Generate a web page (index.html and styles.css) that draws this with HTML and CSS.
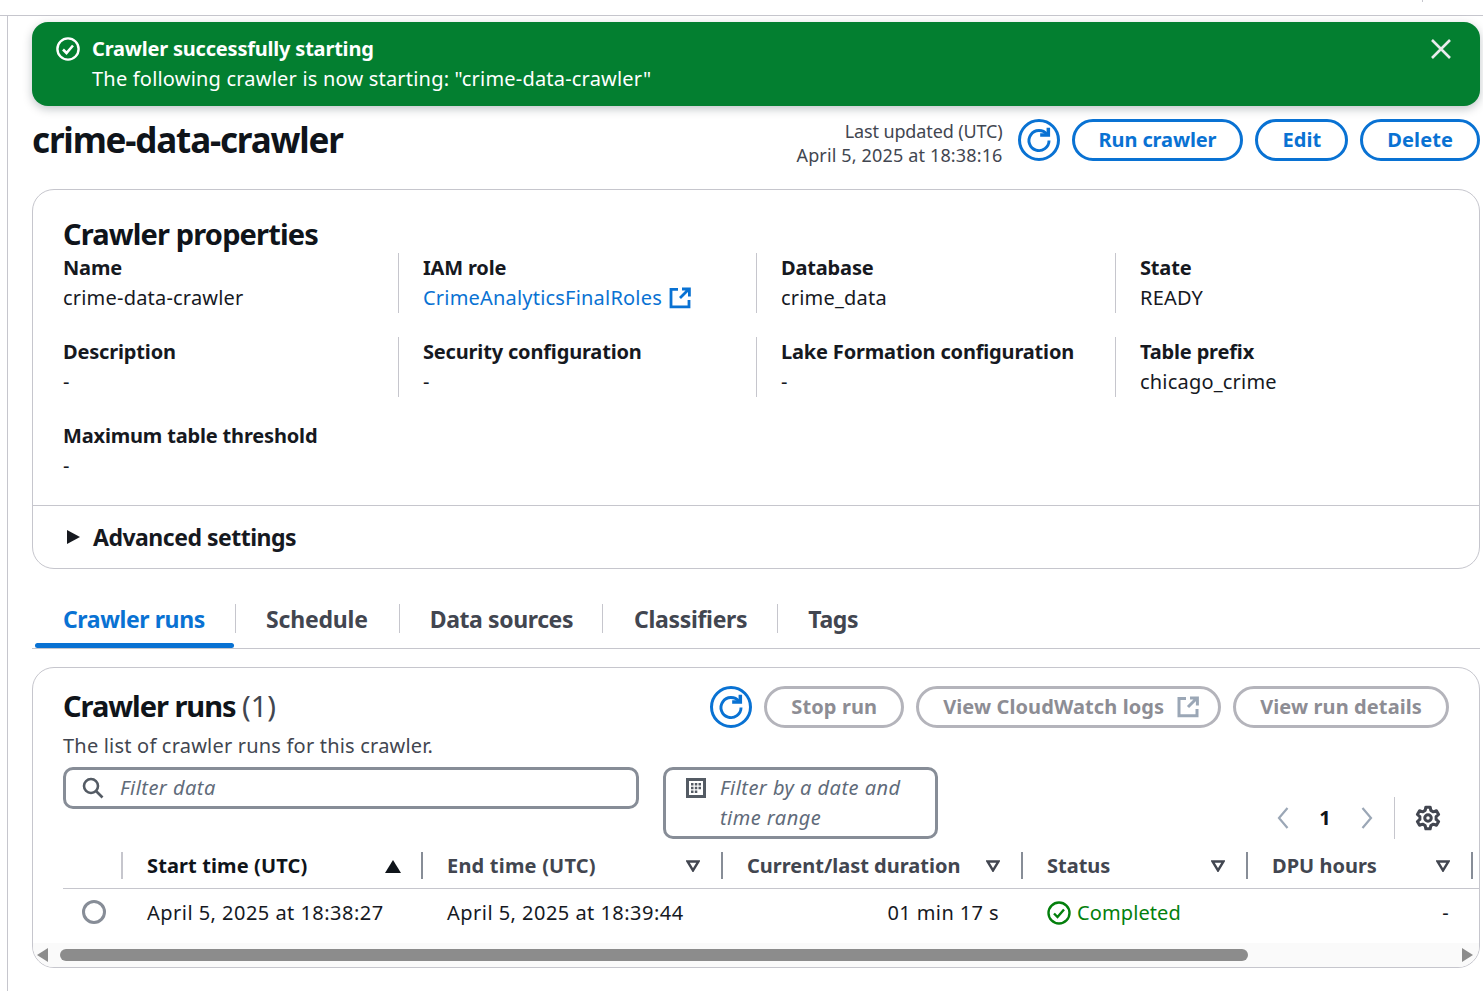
FILE: index.html
```html
<!DOCTYPE html>
<html lang="en">
<head>
<meta charset="utf-8">
<title>crime-data-crawler</title>
<link rel="stylesheet" href="styles.css">
</head>
<body>
<div class="topbar"><span class="topbar-tick"></span></div>
<div class="frame">
<main class="main">
  <section class="flash">
    <svg class="flash-icon" viewBox="0 0 24 24" fill="none" stroke="#fff" stroke-width="2.4"><circle cx="12" cy="12" r="10.6"/><path d="M7 12.500l3.500 3.500 6.500-7.500" stroke-width="2.600"/></svg>
    <div class="flash-text">
      <div class="flash-title">Crawler successfully starting</div>
      <div>The following crawler is now starting: "crime-data-crawler"</div>
    </div>
    <svg class="flash-close" viewBox="0 0 20 20" fill="none" stroke="#e9ebed" stroke-width="2.6"><path d="M1 1l18 18M19 1L1 19"/></svg>
  </section>

  <header class="page-head">
    <h1 class="page-title">crime-data-crawler</h1>
    <div class="updated"><span class="updated-a">Last updated (UTC)</span><span class="updated-b">April 5, 2025 at 18:38:16</span></div>
    <button class="btn-icon"><svg viewBox="0 0 24 24" fill="none" stroke="#0972d3" stroke-width="2.500"><path d="M18.800 7.200A8.600 8.600 0 1 0 20.600 12.500"/><path d="M13 7.800h7V1.500" stroke-width="3"/></svg></button>
    <button class="btn">Run crawler</button>
    <button class="btn btn-wide">Edit</button>
    <button class="btn btn-wide">Delete</button>
  </header>

  <section class="card props">
    <h2 class="card-title">Crawler properties</h2>
    <div class="kv-grid">
      <div class="kv"><div class="k">Name</div><div>crime-data-crawler</div></div>
      <div class="kv"><div class="k">IAM role</div><div class="link">CrimeAnalyticsFinalRoles <svg class="ext" viewBox="0 0 22 22" fill="none" stroke="#0972d3" stroke-width="2.8"><path d="M9 2.4H2v17.4h18V13"/><path d="M13 2h7.4v7.4M20 2l-9 9"/></svg></div></div>
      <div class="kv"><div class="k">Database</div><div>crime_data</div></div>
      <div class="kv"><div class="k">State</div><div>READY</div></div>
      <div class="kv"><div class="k">Description</div><div>-</div></div>
      <div class="kv"><div class="k">Security configuration</div><div>-</div></div>
      <div class="kv"><div class="k">Lake Formation configuration</div><div>-</div></div>
      <div class="kv"><div class="k">Table prefix</div><div>chicago_crime</div></div>
      <div class="kv"><div class="k">Maximum table threshold</div><div>-</div></div>
    </div>
    <div class="advanced"><span class="caret"></span><span class="advanced-label">Advanced settings</span></div>
  </section>

  <nav class="tabs">
    <a class="tab tab-active">Crawler runs</a>
    <a class="tab tab-schedule">Schedule</a>
    <a class="tab tab-sources">Data sources</a>
    <a class="tab tab-classifiers">Classifiers</a>
    <a class="tab">Tags</a>
  </nav>

  <section class="card runs">
    <div class="runs-head">
      <div>
        <h2 class="runs-title">Crawler runs <span class="count">(1)</span></h2>
        <div class="runs-desc">The list of crawler runs for this crawler.</div>
      </div>
      <div class="runs-actions">
        <button class="btn-icon"><svg viewBox="0 0 24 24" fill="none" stroke="#0972d3" stroke-width="2.500"><path d="M18.800 7.200A8.600 8.600 0 1 0 20.600 12.500"/><path d="M13 7.800h7V1.500" stroke-width="3"/></svg></button>
        <button class="btn btn-off">Stop run</button>
        <button class="btn btn-off">View CloudWatch logs <svg class="ext ext-off" viewBox="0 0 22 22" fill="none" stroke="#9ba7b6" stroke-width="3"><path d="M9 2.4H2v17.4h18V13"/><path d="M13 2h7.4v7.4M20 2l-9 9"/></svg></button>
        <button class="btn btn-off">View run details</button>
      </div>
    </div>
    <div class="filters">
      <div class="field field-search">
        <svg class="field-icon" viewBox="0 0 22 22" fill="none" stroke="#545b64" stroke-width="2.6"><circle cx="9" cy="9" r="7"/><path d="M14 14l6.5 6.5"/></svg>
        <span class="placeholder">Filter data</span>
      </div>
      <div class="field field-date">
        <svg class="field-icon cal" viewBox="0 0 20 20"><rect x="1.500" y="1.500" width="17" height="17" fill="none" stroke="#545b64" stroke-width="3"/><path d="M5 5h2.500v2.500H5zM8.800 5h2.500v2.500H8.800zM12.500 5H15v2.500h-2.500zM5 8.800h2.500v2.500H5zM8.800 8.800h2.500v2.500H8.800zM12.500 8.800H15v2.500h-2.500zM5 12.500h2.500V15H5zM8.800 12.500h2.500V15H8.800z" fill="#545b64"/></svg>
        <span class="placeholder">Filter by a date and<br>time range</span>
      </div>
      <div class="pager">
        <svg class="chev" viewBox="0 0 12 22" fill="none" stroke="#9ba7b6" stroke-width="2.200"><path d="M10.500 1L2 11l8.500 10"/></svg>
        <span class="page-num">1</span>
        <svg class="chev" viewBox="0 0 12 22" fill="none" stroke="#9ba7b6" stroke-width="2.200"><path d="M1.500 1L10 11 1.500 21"/></svg>
        <span class="pager-sep"></span>
        <svg class="gear" viewBox="0 0 24 24" fill="none" stroke="#424650" stroke-width="2.800"><path d="M10 2h4l.6 3 2.300 1.300 2.900-1 2 3.400-2.300 2v2.600l2.300 2-2 3.400-2.900-1-2.300 1.300-.6 3h-4l-.6-3-2.300-1.300-2.900 1-2-3.400 2.300-2v-2.600l-2.300-2 2-3.400 2.900 1L9.400 5z" stroke-linejoin="round"/><circle cx="12" cy="12" r="3"/></svg>
      </div>
    </div>
    <div class="table">
      <div class="th th-first"></div>
      <div class="th th-sorted"><span>Start time (UTC)</span><span class="sort-up"></span></div>
      <div class="th th-endtime"><span>End time (UTC)</span><svg class="sort" viewBox="0 0 14 12" fill="none" stroke="#424650" stroke-width="2.400"><path d="M1.500 1.500h11L7 10.500z"/></svg></div>
      <div class="th"><span>Current/last duration</span><svg class="sort" viewBox="0 0 14 12" fill="none" stroke="#424650" stroke-width="2.400"><path d="M1.500 1.500h11L7 10.500z"/></svg></div>
      <div class="th"><span>Status</span><svg class="sort" viewBox="0 0 14 12" fill="none" stroke="#424650" stroke-width="2.400"><path d="M1.500 1.500h11L7 10.500z"/></svg></div>
      <div class="th"><span>DPU hours</span><svg class="sort" viewBox="0 0 14 12" fill="none" stroke="#424650" stroke-width="2.400"><path d="M1.500 1.500h11L7 10.500z"/></svg></div>
      <div class="th th-end"></div>
      <div class="td td-radio"><span class="radio"></span></div>
      <div class="td td-text">April 5, 2025 at 18:38:27</div>
      <div class="td td-text">April 5, 2025 at 18:39:44</div>
      <div class="td td-right">01 min 17 s</div>
      <div class="td td-status"><svg class="ok" viewBox="0 0 24 24" fill="none" stroke="#037f0c" stroke-width="2.400"><circle cx="12" cy="12" r="10.500"/><path d="M7 12.500l3.500 3.500 6.500-7.500"/></svg>Completed</div>
      <div class="td td-right">-</div>
      <div class="td"></div>
    </div>
    <div class="scroll">
      <span class="scroll-left"></span>
      <span class="scroll-thumb"></span>
      <span class="scroll-right"></span>
    </div>
  </section>
</main>
</div>
</body>
</html>
```
FILE: styles.css
```css
* { box-sizing: border-box; }
html, body { margin: 0; padding: 0; height: 100%; overflow: hidden; background: #fff; }
body { font-family: "Noto Sans", "Open Sans", sans-serif; font-size: 20px; line-height: 30px; color: #16191f; letter-spacing: 0.2px; }
.topbar { height: 16px; border-bottom: 1px solid #c6c6cd; display: flex; justify-content: flex-end; }
.topbar-tick { width: 1px; height: 2px; background: #c6c6cd; margin-right: 60px; }
.frame { height: 975px; margin-left: 7px; border-left: 1px solid #c6c6cd; padding: 6px 3px 0 24px; }
.main { display: flex; flex-direction: column; }

.flash { height: 84px; background: #037f30; color: #fff; border-radius: 16px; display: flex; padding: 12px 29px 0 24px; box-shadow: 0 3px 10px rgba(0,28,36,.25); }
.flash-icon { width: 24px; height: 24px; margin: 3px 12px 0 0; flex: none; }
.flash-text { flex: 1; }
.flash-title { font-weight: 700; letter-spacing: -0.2px; }
.flash-close { width: 20px; height: 20px; margin-top: 5px; }

.page-head { display: flex; align-items: flex-start; margin-top: 13px; height: 70px; }
.page-title { margin: -1px auto 0 0; font-size: 35px; line-height: 44px; font-weight: 700; letter-spacing: -1.17px; color: #0f141a; }
.updated { text-align: right; font-size: 18px; line-height: 24px; color: #424650; margin: 0 15px 0 0; }
.updated-a { display: block; letter-spacing: -0.12px; }
.updated-b { display: block; letter-spacing: 0.15px; }
.btn-icon { width: 42px; height: 42px; border-radius: 50%; border: 3px solid #0972d3; background: #fff; padding: 4px; margin: 0 12px 0 0; display: flex; }
.btn-icon svg { width: 28px; height: 28px; }
.btn { height: 42px; padding: 0 24px; border-radius: 21px; border: 3px solid #0972d3; background: #fff; color: #0972d3; font: inherit; font-weight: 700; letter-spacing: -0.12px; display: flex; align-items: center; gap: 13px; white-space: nowrap; }
.btn-wide { letter-spacing: 0.1px; }
.page-head .btn + .btn { margin-left: 12px; }

.card { border: 1px solid #c6c6cd; border-radius: 22px; background: #fff; }
.props { height: 380px; padding-top: 26px; }
.card-title { margin: 0 30px; font-size: 29px; line-height: 36px; font-weight: 700; letter-spacing: -0.85px; color: #0f141a; }
.kv-grid { display: grid; grid-template-columns: 335px 358px 359px 1fr; grid-auto-rows: 60px; row-gap: 24px; margin: 1px 30px 0; height: 228px; }
.kv + .kv { padding-left: 24px; border-left: 1px solid #c6c6cd; }
.kv:nth-child(5), .kv:nth-child(9) { padding-left: 0; border-left: 0; }
.k { font-weight: 700; letter-spacing: -0.17px; }
.link { color: #0972d3; display: flex; align-items: center; gap: 7px; }
.ext { width: 22px; height: 22px; flex: none; }
.ext-off { margin-right: -5px; }
.advanced { border-top: 1px solid #c6c6cd; margin-top: 24px; height: 64px; display: flex; align-items: center; padding: 0 0 2px 34px; }
.caret { width: 0; height: 0; border-left: 13px solid #16191f; border-top: 7.500px solid transparent; border-bottom: 7.500px solid transparent; margin-right: 13px; }
.advanced-label { font-size: 23px; font-weight: 700; letter-spacing: -0.5px; }

.tabs { display: flex; height: 80px; padding: 35px 0 0 3px; border-bottom: 1px solid #c6c6cd; margin-bottom: 18px; }
.tab { height: 44px; padding: 0 31px; font-size: 23px; line-height: 30px; font-weight: 700; color: #424650; letter-spacing: -0.32px; position: relative; background-image: linear-gradient(#c6c6cd,#c6c6cd); background-repeat: no-repeat; background-size: 1px 29px; background-position: left top; }
.tab:first-child { background-image: none; padding: 0 0 0 28px; width: 200px; letter-spacing: -0.4px; }
.tab-schedule { letter-spacing: -0.2px; }
.tab-sources { letter-spacing: -0.4px; padding-right: 29px; }
.tab-classifiers { padding: 0 30px 0 32px; }
.tab-active { color: #0972d3; }
.tab-active::after { content: ""; position: absolute; left: 0; right: 1px; bottom: 0; height: 5px; background: #0972d3; border-radius: 3px; }

.runs { height: 301px; padding: 18px 0 0; position: relative; overflow: hidden; }
.runs-head { display: flex; justify-content: space-between; padding: 0 30px; height: 81px; }
.runs-title { margin: 2px 0 0; font-size: 29px; line-height: 36px; font-weight: 700; letter-spacing: -1.03px; color: #0f141a; }
.count { font-weight: 400; color: #424650; letter-spacing: 0; }
.runs-desc { margin-top: 7px; color: #424650; }
.runs-actions { display: flex; gap: 12px; }
.runs-actions .btn-icon { margin-right: 0; }
.btn-off { border-color: #b4b4bb; color: #8d8d94; background: #fff; letter-spacing: 0.1px; }
.filters { display: flex; align-items: flex-start; padding: 0 30px; height: 72px; }
.field { border: 3px solid #878d97; border-radius: 10px; display: flex; }
.field-search { width: 576px; height: 42px; align-items: center; margin-right: 24px; padding: 0 14px 0 16px; gap: 16px; }
.field-date { width: 275px; height: 72px; padding: 3px 14px 0 20px; gap: 14px; }
.field-icon { width: 22px; height: 22px; flex: none; }
.cal { width: 20px; height: 20px; margin-top: 5px; }
.placeholder { font-style: italic; color: #5f6b7a; letter-spacing: 0.47px; }
.pager { margin-left: auto; display: flex; align-items: center; height: 42px; margin-top: 30px; margin-right: 8px; }
.chev { width: 12px; height: 22px; }
.page-num { font-weight: 700; width: 72px; text-align: center; color: #0f141a; }
.pager-sep { width: 1px; height: 42px; background: #c6c6cd; margin: 0 20px 0 21px; }
.gear { width: 26px; height: 26px; }
.table { display: grid; grid-template-columns: 58px 300px 300px 300px 225px 225px 1fr; margin: 12px 0 0 30px; }
.th { height: 38px; border-bottom: 1px solid #c6c6cd; padding: 1px 21px 0 26px; position: relative; display: flex; align-items: flex-start; justify-content: space-between; font-weight: 700; color: #424650; line-height: 27px; letter-spacing: 0; }
.th::before { content: ""; position: absolute; left: 0; top: 1px; width: 2px; height: 27px; background: #878d97; }
.th-first { padding: 0; }
.th-first::before { display: none; }
.th-sorted { color: #0f141a; padding-right: 20px; letter-spacing: 0.12px; }
.th-sorted::before { background: #c6c6cd; }
.th-endtime { letter-spacing: 0.2px; }
.th-end { padding: 0; }
.sort, .sort-up { margin-top: 8px; }
.sort { width: 14px; height: 12px; }
.sort-up { width: 0; height: 0; border-left: 8px solid transparent; border-right: 8px solid transparent; border-bottom: 13px solid #0f141a; }
.td { height: 49px; display: flex; align-items: center; padding-bottom: 2px; }
.td-radio { padding-left: 19px; padding-bottom: 3px; }
.td-text { padding-left: 26px; letter-spacing: 0.47px; }
.radio { width: 24px; height: 24px; border-radius: 50%; border: 3px solid #878d97; background: #fff; }
.td-right { justify-content: flex-end; padding-right: 22px; letter-spacing: 0.4px; }
.td-status { color: #037f0c; padding-left: 26px; gap: 6px; letter-spacing: 0.1px; }
.ok { width: 24px; height: 24px; }
.scroll { position: absolute; left: 0; right: 0; bottom: 0; height: 24px; display: flex; align-items: center; background: #fafafa; }
.scroll-left { width: 0; height: 0; border-right: 11px solid #8c8c8c; border-top: 7px solid transparent; border-bottom: 7px solid transparent; margin: 0 12px 0 4px; }
.scroll-thumb { width: 1188px; height: 12px; background: #8c8c8c; border-radius: 6px; margin-right: auto; }
.scroll-right { width: 0; height: 0; border-left: 11px solid #8c8c8c; border-top: 7px solid transparent; border-bottom: 7px solid transparent; margin-right: 6px; }
```
